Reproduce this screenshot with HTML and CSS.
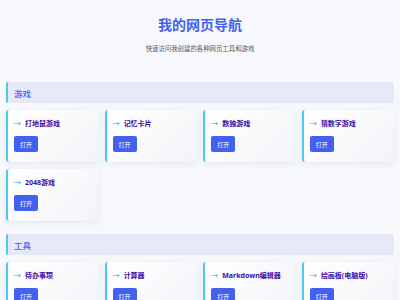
FILE: index.html
```html
<!DOCTYPE html>
<html lang="zh">
<head>
<meta charset="utf-8">
<title>我的网页导航</title>
<link rel="stylesheet" href="styles.css">
</head>
<body>
<div class="page">
  <header class="hero">
    <h1 class="hero-title">我的网页导航</h1>
    <p class="hero-sub">快速访问我创建的各种网页工具和游戏</p>
  </header>

  <section class="section">
    <h2 class="section-title">游戏</h2>
    <div class="grid">
      <div class="card"><div class="card-title"><span class="arrow">→</span>打地鼠游戏</div><a class="btn">打开</a></div>
      <div class="card"><div class="card-title"><span class="arrow">→</span>记忆卡片</div><a class="btn">打开</a></div>
      <div class="card"><div class="card-title"><span class="arrow">→</span>数独游戏</div><a class="btn">打开</a></div>
      <div class="card"><div class="card-title"><span class="arrow">→</span>猜数字游戏</div><a class="btn">打开</a></div>
      <div class="card"><div class="card-title"><span class="arrow">→</span>2048游戏</div><a class="btn">打开</a></div>
    </div>
  </section>

  <section class="section">
    <h2 class="section-title">工具</h2>
    <div class="grid">
      <div class="card"><div class="card-title"><span class="arrow">→</span>待办事项</div><a class="btn">打开</a></div>
      <div class="card"><div class="card-title"><span class="arrow">→</span>计算器</div><a class="btn">打开</a></div>
      <div class="card"><div class="card-title"><span class="arrow">→</span>Markdown编辑器</div><a class="btn">打开</a></div>
      <div class="card"><div class="card-title"><span class="arrow">→</span>绘画板(电脑版)</div><a class="btn">打开</a></div>
    </div>
  </section>
</div>
</body>
</html>
```
FILE: styles.css
```css
* { box-sizing: border-box; }
html, body {
  margin: 0;
  padding: 0;
  background: #f7f8fb;
  font-family: "Noto Sans", "Noto Sans CJK SC", sans-serif;
}
.page {
  padding: 0 6px;
}
.hero {
  padding-top: 16px;
  text-align: center;
}
.hero-title {
  margin: 0;
  font-size: 14px;
  line-height: 18px;
  font-weight: 700;
  color: #4361ee;
}
.hero-sub {
  margin: 11px 0 0;
  font-size: 6.4px;
  line-height: 8px;
  color: #555a66;
}
.section {
  margin-top: 29px;
}
.section + .section {
  margin-top: 13px;
}
.section-title {
  margin: 0 0 7px;
  height: 21px;
  display: flex;
  align-items: center;
  padding-left: 6px;
  background: #e7e9f8;
  border-left: 2px solid #4cc9f0;
  border-radius: 2px;
  font-size: 8.5px;
  font-weight: 500;
  color: #4361ee;
}
.grid {
  display: grid;
  grid-template-columns: repeat(4, 1fr);
  column-gap: 6.5px;
  row-gap: 7px;
}
.card {
  height: 52px;
  padding: 9px 6px 10px;
  background: linear-gradient(135deg, #ffffff 0%, #f3f4f8 100%);
  border-left: 2px solid #4cc9f0;
  border-radius: 3px;
  box-shadow: 0 2px 6px rgba(40, 50, 90, 0.08);
  display: flex;
  flex-direction: column;
  align-items: flex-start;
  gap: 7px;
}
.card-title {
  font-size: 7px;
  line-height: 10px;
  font-weight: 700;
  color: #3a0ca3;
  white-space: nowrap;
}
.arrow {
  color: #4cc9f0;
  margin-right: 4px;
}
.btn {
  display: flex;
  align-items: center;
  justify-content: center;
  width: 24px;
  height: 16px;
  background: #4361ee;
  color: #ffffff;
  border-radius: 2px;
  font-size: 6px;
  text-decoration: none;
}
```
